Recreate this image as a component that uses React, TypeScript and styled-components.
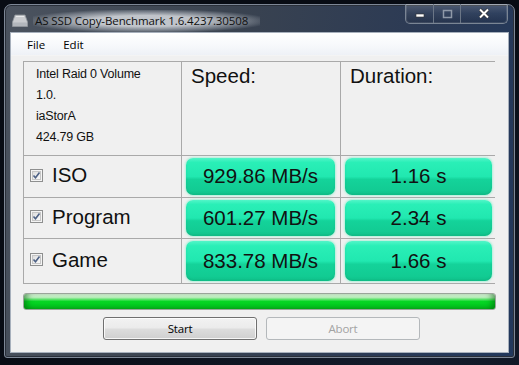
import { Fragment } from 'react';
import styled, { createGlobalStyle } from 'styled-components';

const GlobalStyle = createGlobalStyle`
    html, body {
        margin: 0;
        padding: 0;
        background: #0a0f18;
        width: 519px;
        height: 365px;
        overflow: hidden;
    }
`;

const Desktop = styled.div`
    width: 519px;
    height: 365px;
    padding: 4px 4px 7px 4px;
    box-sizing: border-box;
    background: radial-gradient(ellipse at 80% 100%, #141c2c 0%, #080c14 70%);
`;

const Frame = styled.div`
    width: 511px;
    height: 354px;
    box-sizing: border-box;
    border: 1px solid #7d8796;
    border-radius: 7px 7px 3px 3px;
    background: linear-gradient(100deg, #4b535f 0%, #3a4350 40%, #2b3a55 75%, #22385c 100%);
    padding: 0 5px 4px 5px;
    display: flex;
    flex-direction: column;
    box-shadow: inset 0 0 0 1px #2a303a;
`;

const TitleBar = styled.div`
    height: 27px;
    display: flex;
    align-items: flex-start;
    justify-content: space-between;
`;

const TitleLeft = styled.div`
    display: flex;
    align-items: center;
    gap: 5px;
    padding: 5px 0 0 2px;
`;

const TitleText = styled.span`
    font-family: "Open Sans", "Noto Sans", sans-serif;
    font-size: 11.5px;
    letter-spacing: -0.1px;
    color: #101010;
    background: radial-gradient(ellipse at center, rgba(225, 228, 232, 0.8) 35%, rgba(190, 196, 204, 0.4) 62%, rgba(120, 128, 140, 0) 78%);
    padding: 3px 12px 4px 2px;
`;

const CaptionGroup = styled.div`
    display: flex;
    margin: -1px 1px 0 0;
    border: 1px solid #7a8594;
    border-top: none;
    border-radius: 0 0 5px 5px;
    overflow: hidden;
    box-shadow: inset 0 0 0 1px rgba(255, 255, 255, 0.12);
`;

const CaptionButton = styled.div<{ $w: number }>`
    width: ${p => p.$w}px;
    height: 19px;
    display: flex;
    align-items: center;
    justify-content: center;
    background: linear-gradient(to bottom, rgba(255, 255, 255, 0.18), rgba(255, 255, 255, 0.04) 50%, rgba(0, 0, 0, 0.1));
    & + & {
        border-left: 1px solid #6b7686;
    }
`;

const Client = styled.div`
    flex: 1;
    background: #f0f0f0;
    border: 1px solid #a7b0bc;
    display: flex;
    flex-direction: column;
`;

const MenuBar = styled.div`
    height: 22px;
    display: flex;
    align-items: center;
    gap: 18px;
    padding-left: 16px;
    background: linear-gradient(to bottom, #ffffff 0%, #f6f8fb 60%, #eef1f6 100%);
    border-bottom: 1px solid #f4f4f4;
    font-family: "Open Sans", "Noto Sans", sans-serif;
    font-size: 11.5px;
    color: #000;
`;

const Body = styled.div`
    padding: 5px 13px 0 12px;
    display: flex;
    flex-direction: column;
`;

const Table = styled.div`
    display: grid;
    grid-template-columns: 157px 158px 154px;
    grid-template-rows: 93px 41px 40px 44px;
    gap: 1px;
    padding: 1px;
    width: 472px;
    box-sizing: border-box;
    background: #a9a9a9;
`;

const Cell = styled.div`
    background: #f0f0f0;
    display: flex;
    align-items: center;
    box-sizing: border-box;
`;

const InfoCell = styled(Cell)`
    flex-direction: column;
    align-items: flex-start;
    padding: 2px 0 0 12px;
    font-family: "Liberation Sans", Arial, sans-serif;
    font-size: 12.5px;
    line-height: 21px;
    color: #111;
    letter-spacing: -0.2px;
`;

const HeaderCell = styled(Cell)`
    align-items: flex-start;
    padding: 2px 0 0 9px;
    font-family: "Liberation Sans", Arial, sans-serif;
    font-size: 20.5px;
    color: #111;
`;

const LabelCell = styled(Cell)`
    padding: 0 0 3px 6px;
    gap: 9px;
    font-family: "Liberation Sans", Arial, sans-serif;
    font-size: 20.5px;
    color: #111;
`;

const ValueCell = styled(Cell)<{ $right: number }>`
    padding: 2px ${p => p.$right}px 2px 4px;
`;

const ValueBox = styled.div`
    flex: 1;
    height: 100%;
    border-radius: 7px;
    display: flex;
    align-items: center;
    justify-content: center;
    padding-bottom: 1px;
    box-sizing: border-box;
    font-family: "Liberation Sans", Arial, sans-serif;
    font-size: 20.5px;
    color: #111;
    background: linear-gradient(to bottom, #52f5c8 0%, #2aefb7 12%, #21e8b0 50%, #14d39a 58%, #11c890 100%);
    box-shadow: 0 0 2px 1px rgba(150, 240, 210, 0.7), inset 0 -2px 2px rgba(0, 120, 80, 0.15);
`;

const Progress = styled.div`
    margin-top: 9px;
    width: 473px;
    height: 17px;
    box-sizing: border-box;
    border: 1px solid #9aa59a;
    border-radius: 3px;
    background: linear-gradient(to bottom, #e6f8e6 0%, #bff2c0 22%, #4fe060 38%, #06d624 50%, #03cc20 75%, #06b41c 100%);
    box-shadow: inset 6px 0 6px -3px rgba(0, 90, 10, 0.55), inset -6px 0 6px -3px rgba(0, 90, 10, 0.55);
`;

const ButtonRow = styled.div`
    margin-top: 7px;
    display: flex;
    justify-content: center;
    gap: 9px;
    padding-left: 5px;
`;

const Button = styled.div<{ $disabled?: boolean }>`
    width: 154px;
    height: 23px;
    box-sizing: border-box;
    border-radius: 3px;
    display: flex;
    align-items: center;
    justify-content: center;
    font-family: "Open Sans", "Noto Sans", sans-serif;
    font-size: 11.5px;
    letter-spacing: -0.2px;
    color: ${p => (p.$disabled ? '#a3a3a3' : '#000')};
    border: 1px solid ${p => (p.$disabled ? '#b4b8bb' : '#707070')};
    background: ${p =>
        p.$disabled
            ? '#f4f4f4'
            : 'linear-gradient(to bottom, #f2f2f2 0%, #ebebeb 48%, #dddddd 52%, #cfcfcf 100%)'};
    box-shadow: ${p => (p.$disabled ? 'none' : 'inset 0 0 0 1px rgba(255,255,255,0.8)')};
`;

function CheckBox() {
    return (
        <svg width="13" height="13" viewBox="0 0 13 13">
            <defs>
                <linearGradient id="cbg" x1="0" y1="0" x2="1" y2="1">
                    <stop offset="0" stopColor="#dcdcdc" />
                    <stop offset="1" stopColor="#fbfbfb" />
                </linearGradient>
            </defs>
            <rect x="0.5" y="0.5" width="12" height="12" fill="#f4f4f4" stroke="#8e8f8f" />
            <rect x="2.5" y="2.5" width="8" height="8" fill="url(#cbg)" stroke="#c6c6c6" />
            <path d="M3.5 6.5 L5.5 8.8 L9.5 3.5" fill="none" stroke="#4d6185" strokeWidth="1.6" />
        </svg>
    );
}

function DriveIcon() {
    return (
        <svg width="16" height="14" viewBox="0 0 16 14">
            <path d="M3 1 H13 L15.5 8 V12.5 H0.5 V8 Z" fill="#c9cbcf" stroke="#8f949b" strokeWidth="0.8" />
            <rect x="1" y="8.5" width="14" height="3.5" fill="#b2b6bc" />
            <path d="M4 2.5 H12" stroke="#e8e9eb" strokeWidth="1" />
        </svg>
    );
}

const rows = [
    { label: 'ISO', speed: '929.86 MB/s', time: '1.16 s' },
    { label: 'Program', speed: '601.27 MB/s', time: '2.34 s' },
    { label: 'Game', speed: '833.78 MB/s', time: '1.66 s' },
];

export default function App() {
    return (
        <>
            <GlobalStyle />
            <Desktop>
                <Frame>
                    <TitleBar>
                        <TitleLeft>
                            <DriveIcon />
                            <TitleText>AS SSD Copy-Benchmark 1.6.4237.30508</TitleText>
                        </TitleLeft>
                        <CaptionGroup>
                            <CaptionButton $w={27}>
                                <svg width="10" height="10" viewBox="0 0 10 10">
                                    <rect x="1" y="5" width="8" height="3" fill="#fff" stroke="#333" strokeWidth="0.6" />
                                </svg>
                            </CaptionButton>
                            <CaptionButton $w={26}>
                                <svg width="11" height="10" viewBox="0 0 11 10">
                                    <rect x="1.5" y="1.5" width="8" height="7" fill="none" stroke="#8f99a8" strokeWidth="1.5" />
                                </svg>
                            </CaptionButton>
                            <CaptionButton $w={46}>
                                <svg width="12" height="11" viewBox="0 0 12 11">
                                    <path d="M2 1.5 L10 9.5 M10 1.5 L2 9.5" stroke="#333" strokeWidth="3.2" />
                                    <path d="M2 1.5 L10 9.5 M10 1.5 L2 9.5" stroke="#fff" strokeWidth="2" />
                                </svg>
                            </CaptionButton>
                        </CaptionGroup>
                    </TitleBar>
                    <Client>
                        <MenuBar>
                            <span>File</span>
                            <span>Edit</span>
                        </MenuBar>
                        <Body>
                            <Table>
                                <InfoCell>
                                    <span>Intel Raid 0 Volume</span>
                                    <span>1.0.</span>
                                    <span>iaStorA</span>
                                    <span>424.79 GB</span>
                                </InfoCell>
                                <HeaderCell>Speed:</HeaderCell>
                                <HeaderCell>Duration:</HeaderCell>
                                {rows.map(row => (
                                    <Fragment key={row.label}>
                                        <LabelCell>
                                            <CheckBox />
                                            <span>{row.label}</span>
                                        </LabelCell>
                                        <ValueCell $right={5}>
                                            <ValueBox>{row.speed}</ValueBox>
                                        </ValueCell>
                                        <ValueCell $right={3}>
                                            <ValueBox>{row.time}</ValueBox>
                                        </ValueCell>
                                    </Fragment>
                                ))}
                            </Table>
                            <Progress />
                            <ButtonRow>
                                <Button>Start</Button>
                                <Button $disabled>Abort</Button>
                            </ButtonRow>
                        </Body>
                    </Client>
                </Frame>
            </Desktop>
        </>
    );
}
